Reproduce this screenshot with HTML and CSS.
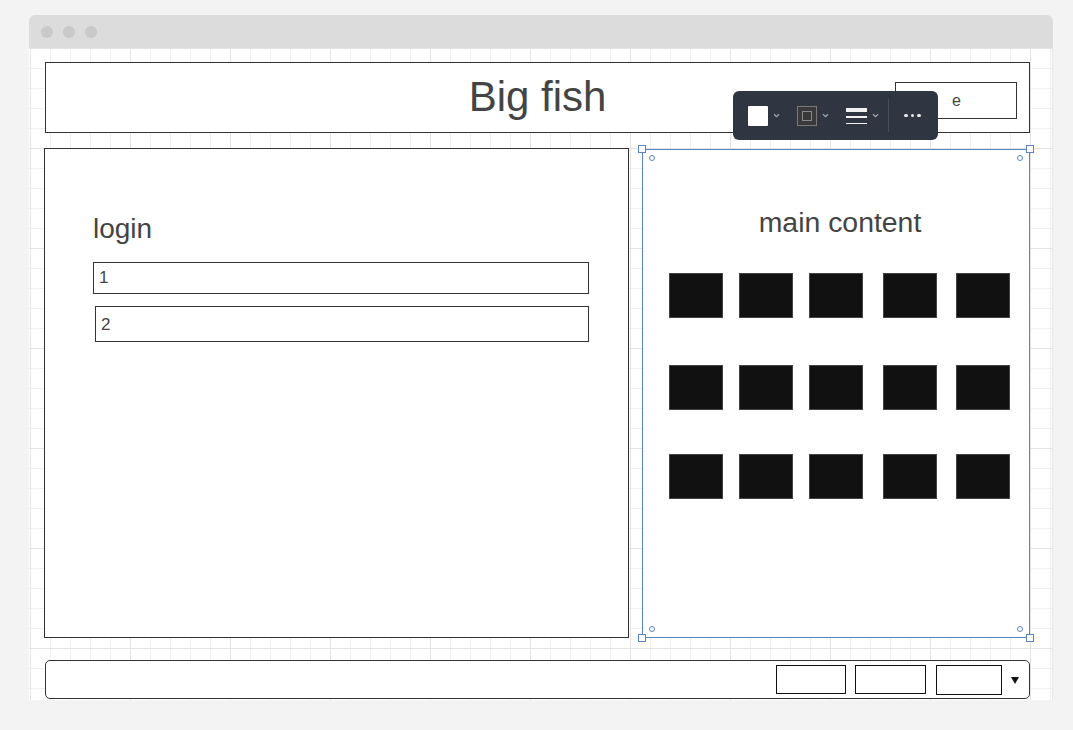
FILE: index.html
```html
<!DOCTYPE html>
<html>
<head>
<meta charset="utf-8">
<link rel="stylesheet" href="styles.css">
</head>
<body>
<div class="window">
  <div class="titlebar">
    <span class="dot"></span><span class="dot"></span><span class="dot"></span>
  </div>
  <div class="canvas">
    <header class="header">
      <div class="spacer"></div>
      <h1 class="title">Big fish</h1>
      <div class="search">e</div>
    </header>

    <div class="toolbar">
      <span class="tb-fill"></span>
      <svg class="chev" width="7" height="5" viewBox="0 0 7 5"><path d="M1 1.2 L3.5 3.6 L6 1.2" fill="none" stroke="#a3a9b3" stroke-width="1.2"/></svg>
      <span class="tb-stroke"><span></span></span>
      <svg class="chev" width="7" height="5" viewBox="0 0 7 5"><path d="M1 1.2 L3.5 3.6 L6 1.2" fill="none" stroke="#a3a9b3" stroke-width="1.2"/></svg>
      <span class="tb-lines"><i class="l1"></i><i class="l2"></i><i class="l3"></i></span>
      <svg class="chev last" width="7" height="5" viewBox="0 0 7 5"><path d="M1 1.2 L3.5 3.6 L6 1.2" fill="none" stroke="#a3a9b3" stroke-width="1.2"/></svg>
      <span class="tb-sep"></span>
      <span class="tb-more"><i></i><i></i><i></i></span>
    </div>

    <div class="main">
      <section class="login">
        <h2 class="login-title">login</h2>
        <div class="field f1">1</div>
        <div class="field f2">2</div>
      </section>
      <section class="content">
        <span class="handle h-tl"></span><span class="handle h-tr"></span>
        <span class="handle h-bl"></span><span class="handle h-br"></span>
        <span class="knob k-tl"></span><span class="knob k-tr"></span>
        <span class="knob k-bl"></span><span class="knob k-br"></span>
        <h2 class="content-title">main content</h2>
        <div class="tiles r1">
          <span class="tile"></span><span class="tile"></span><span class="tile"></span><span class="tile"></span><span class="tile"></span>
        </div>
        <div class="tiles r2">
          <span class="tile"></span><span class="tile"></span><span class="tile"></span><span class="tile"></span><span class="tile"></span>
        </div>
        <div class="tiles r3">
          <span class="tile"></span><span class="tile"></span><span class="tile"></span><span class="tile"></span><span class="tile"></span>
        </div>
      </section>
    </div>

    <footer class="footer">
      <span class="fbox b1"></span>
      <span class="fbox b2"></span>
      <span class="fbox b3"></span>
      <span class="caret"></span>
    </footer>
  </div>
</div>
</body>
</html>
```
FILE: styles.css
```css
* { box-sizing: border-box; }
html, body { margin: 0; padding: 0; }
body {
  background: #f3f3f3;
  font-family: "Liberation Sans", Arial, sans-serif;
  color: #444;
  width: 1073px;
  height: 730px;
  overflow: hidden;
}
.window {
  margin: 15px 0 0 29px;
  width: 1024px;
  height: 686px;
}
.titlebar {
  height: 33px;
  background: #dcdcdc;
  border-radius: 6px 6px 0 0;
  display: flex;
  align-items: center;
  gap: 10px;
  padding-left: 12px;
}
.dot {
  width: 12px;
  height: 12px;
  border-radius: 50%;
  background: #c9c9c9;
}
.canvas {
  position: relative;
  height: 652px;
  background-color: #fff;
  background-image:
    linear-gradient(to right, #e3e3e3 1px, transparent 1px),
    linear-gradient(to bottom, #e3e3e3 1px, transparent 1px),
    linear-gradient(to right, #efefef 1px, transparent 1px),
    linear-gradient(to bottom, #efefef 1px, transparent 1px);
  background-size: 100px 100px, 100px 100px, 20px 20px, 20px 20px;
  background-position: 1px 0, 0 0, 1px 0, 0 0;
  border-right: 1px solid #e6e6e6;
  padding: 14px 0 0 15px;
}
.header {
  margin-left: 1px;
  width: 985px;
  height: 71px;
  border: 1px solid #333;
  background: #fff;
  display: grid;
  grid-template-columns: 1fr auto 1fr;
}
.title {
  margin: 0;
  font-weight: normal;
  font-size: 42px;
  line-height: 68px;
  color: #444;
}
.search {
  justify-self: end;
  align-self: start;
  margin: 19px 12px 0 0;
  width: 122px;
  height: 37px;
  border: 1px solid #333;
  font-size: 16px;
  line-height: 35px;
  padding-left: 56px;
  color: #444;
}
.toolbar {
  position: absolute;
  left: 704px;
  top: 43px;
  width: 205px;
  height: 49px;
  background: #2f3541;
  border-radius: 6px;
  display: flex;
  align-items: center;
  padding-left: 15px;
}
.tb-fill {
  width: 20px;
  height: 20px;
  background: #fff;
  border-radius: 1px;
}
.chev {
  display: block;
  margin-left: 5px;
  margin-right: 17px;
}
.chev.last { margin-right: 9px; }
.tb-stroke {
  width: 20px;
  height: 20px;
  border: 1px solid #7a7a7a;
  background: #3a3a3a;
  display: flex;
  align-items: center;
  justify-content: center;
}
.tb-stroke span {
  width: 10px;
  height: 10px;
  border: 1px solid #8a8a8a;
}
.tb-lines {
  width: 21px;
  height: 16px;
  display: flex;
  flex-direction: column;
  justify-content: space-between;
}
.tb-lines i { display: block; background: #f2f2f2; }
.tb-lines .l1 { height: 4px; }
.tb-lines .l2 { height: 2px; }
.tb-lines .l3 { height: 1px; }
.tb-sep {
  width: 1px;
  height: 33px;
  background: #474d59;
}
.tb-more {
  margin-left: 15px;
  display: flex;
  gap: 3px;
}
.tb-more i {
  width: 3.5px;
  height: 3.5px;
  border-radius: 50%;
  background: #eaeaea;
  display: block;
}
.main {
  display: flex;
  align-items: flex-start;
  margin-top: 15px;
  gap: 13px;
}
.login {
  width: 585px;
  height: 490px;
  border: 1px solid #333;
  background: #fff;
  padding: 64px 0 0 48px;
}
.login-title, .content-title {
  margin: 0;
  font-weight: normal;
  font-size: 28px;
  line-height: 32px;
  color: #444;
}
.field {
  border: 1px solid #333;
  font-size: 17px;
  color: #444;
  padding-left: 5px;
}
.f1 {
  margin-top: 17px;
  width: 496px;
  height: 32px;
  line-height: 30px;
}
.f2 {
  margin-top: 12px;
  margin-left: 2px;
  width: 494px;
  height: 36px;
  line-height: 36px;
}
.content {
  position: relative;
  margin-top: 1px;
  width: 388px;
  height: 489px;
  border: 1px solid #5b84c4;
  background: #fff;
  padding-top: 56px;
}
.content-title {
  text-align: center;
  padding-left: 8px;
  font-size: 28.4px;
}
.tiles {
  display: flex;
  padding-left: 26px;
}
.tile {
  width: 54px;
  height: 45px;
  background: #111;
  border: 1px solid #444;
  margin-right: 16px;
}
.tile:nth-child(3) { margin-right: 20px; }
.tile:nth-child(4) { margin-right: 19px; }
.r1 { margin-top: 35px; }
.r2 { margin-top: 47px; }
.r3 { margin-top: 44px; }
.handle {
  position: absolute;
  width: 8px;
  height: 8px;
  border: 1px solid #5a83c8;
  background: #fff;
}
.h-tl { left: -5px; top: -5px; }
.h-tr { right: -5px; top: -5px; }
.h-bl { left: -5px; bottom: -5px; }
.h-br { right: -5px; bottom: -5px; }
.knob {
  position: absolute;
  width: 6px;
  height: 6px;
  border: 1px solid #5a83c8;
  border-radius: 50%;
  background: #fff;
}
.k-tl { left: 6px; top: 5px; }
.k-tr { right: 6px; top: 5px; }
.k-bl { left: 6px; bottom: 5px; }
.k-br { right: 6px; bottom: 5px; }
.footer {
  margin-top: 22px;
  margin-left: 1px;
  width: 985px;
  height: 39px;
  border: 1px solid #333;
  border-radius: 5px;
  background: #fff;
  display: flex;
  align-items: flex-start;
  justify-content: flex-end;
  padding: 4px 10px 0 0;
}
.fbox {
  border: 1px solid #111;
  height: 29px;
  background: #fff;
}
.b1 { width: 70px; }
.b2 { width: 71px; margin-left: 9px; }
.b3 { width: 66px; height: 30px; margin-left: 10px; }
.caret {
  margin: 12px 0 0 9px;
  width: 0;
  height: 0;
  border-left: 4.5px solid transparent;
  border-right: 4.5px solid transparent;
  border-top: 7px solid #111;
}
```
